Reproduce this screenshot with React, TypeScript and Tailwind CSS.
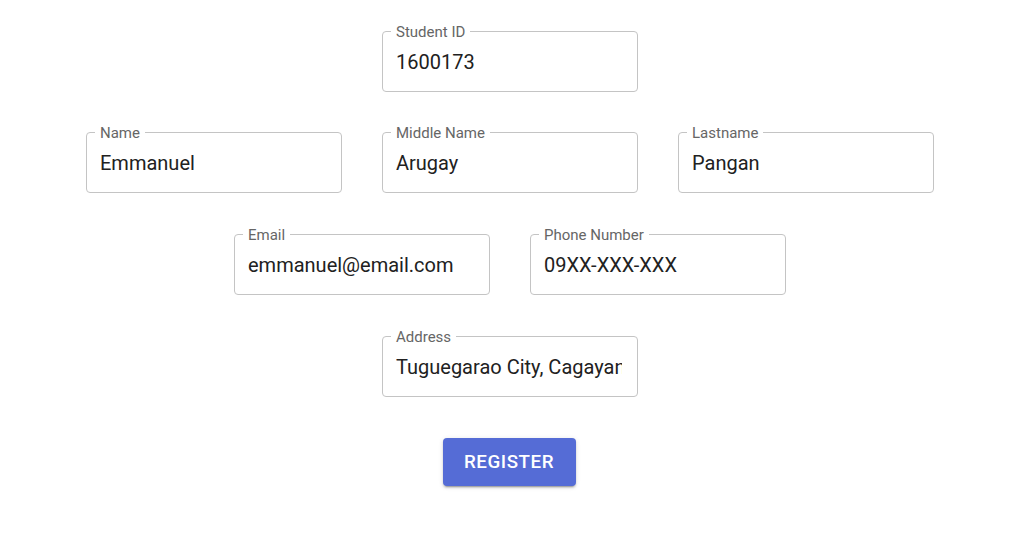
import React from "react";

function Field({ label, value }: { label: string; value: string }) {
  return (
    <div className="relative w-[256px] h-[61px] rounded-[4px] border border-[#c4c4c4] bg-white">
      <span className="absolute left-[8px] top-[-9px] px-[5px] bg-white text-[15px] leading-[18px] text-[#666666]">
        {label}
      </span>
      <div className="flex h-full items-center pl-[13px] pr-[15px] text-[20px] text-[#212121]">
        <span className="block w-full overflow-hidden whitespace-nowrap">{value}</span>
      </div>
    </div>
  );
}

export default function App() {
  return (
    <div
      className="min-h-[549px] w-[1020px] bg-white flex flex-col items-center pt-[31px]"
      style={{ fontFamily: "Roboto, 'Noto Sans', sans-serif" }}
    >
      <div className="flex gap-[40px]">
        <Field label="Student ID" value="1600173" />
      </div>
      <div className="flex gap-[40px] mt-[40px]">
        <Field label="Name" value="Emmanuel" />
        <Field label="Middle Name" value="Arugay" />
        <Field label="Lastname" value="Pangan" />
      </div>
      <div className="flex gap-[40px] mt-[41px]">
        <Field label="Email" value="emmanuel@email.com" />
        <Field label="Phone Number" value="09XX-XXX-XXX" />
      </div>
      <div className="flex gap-[40px] mt-[41px]">
        <Field label="Address" value="Tuguegarao City, Cagayan" />
      </div>
      <button className="mt-[41px] mr-[2px] w-[133px] h-[48px] rounded-[4px] bg-[#556cd6] text-white text-[18.75px] font-medium uppercase tracking-[0.54px] shadow-[0_3px_1px_-2px_rgba(0,0,0,0.2),0_2px_2px_0_rgba(0,0,0,0.14),0_1px_5px_0_rgba(0,0,0,0.12)]">
        Register
      </button>
    </div>
  );
}
